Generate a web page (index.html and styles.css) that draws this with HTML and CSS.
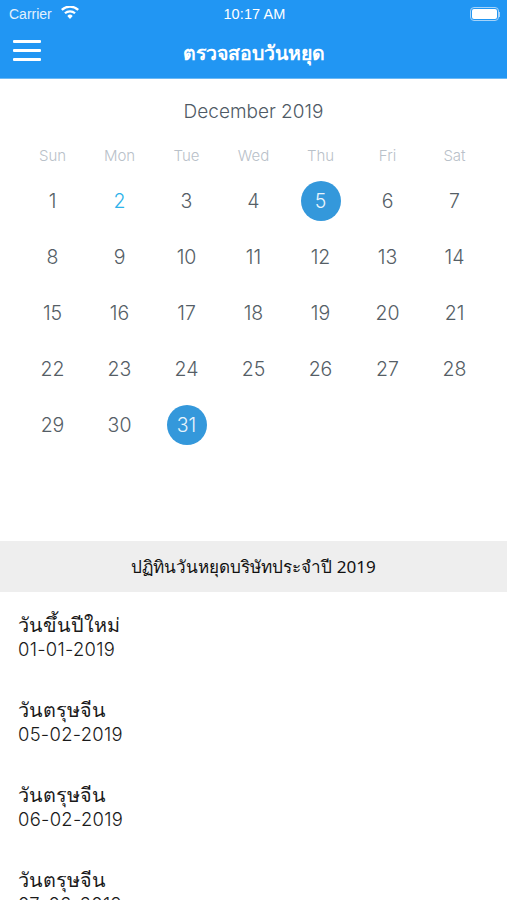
FILE: index.html
```html
<!DOCTYPE html>
<html lang="th">
<head>
<meta charset="utf-8">
<title>ตรวจสอบวันหยุด</title>
<link rel="stylesheet" href="styles.css">
</head>
<body>
<div class="app">
  <header class="top">
    <div class="status">
      <div class="status-left">
        <span>Carrier</span>
        <svg class="wifi" viewBox="0 0 18 13" aria-hidden="true"><path d="M9 13 6.300 9.900a3.900 3.900 0 0 1 5.400 0z"/><path d="M4.700 8.100 3.200 6.400a8.600 8.600 0 0 1 11.600 0l-1.500 1.700a6.300 6.300 0 0 0-8.600 0z"/><path d="M1.600 4.700 0 3a13.300 13.300 0 0 1 18 0l-1.600 1.700a11 11 0 0 0-14.800 0z"/></svg>
      </div>
      <span class="clock">10:17 AM</span>
      <div class="battery"><span class="battery-body"><span class="battery-fill"></span></span><span class="battery-cap"></span></div>
    </div>
    <div class="nav">
      <div class="burger"><span></span><span></span><span></span></div>
      <h1>ตรวจสอบวันหยุด</h1>
    </div>
  </header>
  <section class="calendar">
    <h2>December 2019</h2>
    <div class="grid weekdays">
      <span>Sun</span><span>Mon</span><span>Tue</span><span>Wed</span><span>Thu</span><span>Fri</span><span>Sat</span>
    </div>
    <div class="grid days">
      <span>1</span><span class="today">2</span><span>3</span><span>4</span><span class="picked">5</span><span>6</span><span>7</span>
      <span>8</span><span>9</span><span>10</span><span>11</span><span>12</span><span>13</span><span>14</span>
      <span>15</span><span>16</span><span>17</span><span>18</span><span>19</span><span>20</span><span>21</span>
      <span>22</span><span>23</span><span>24</span><span>25</span><span>26</span><span>27</span><span>28</span>
      <span>29</span><span>30</span><span class="picked">31</span>
    </div>
  </section>
  <div class="band">ปฏิทินวันหยุดบริษัทประจำปี 2019</div>
  <ul class="list">
    <li><strong>วันขึ้นปีใหม่</strong><span>01-01-2019</span></li>
    <li><strong>วันตรุษจีน</strong><span>05-02-2019</span></li>
    <li><strong>วันตรุษจีน</strong><span>06-02-2019</span></li>
    <li><strong>วันตรุษจีน</strong><span>07-02-2019</span></li>
  </ul>
</div>
</body>
</html>
```
FILE: styles.css
```css
* { box-sizing: border-box; }
html, body { margin: 0; padding: 0; height: 900px; overflow: hidden; background: #fff; }
body { font-family: "Inter", "Liberation Sans", "Noto Sans", sans-serif; }
.app { width: 507px; height: 900px; overflow: hidden; }
.top { height: 79px; background: #2196f3; color: #fff; border-bottom: 1px solid #6bb9f5; }
.status { height: 28px; padding: 0 7px 0 9px; display: grid; grid-template-columns: 1fr auto 1fr; align-items: center; font-family: "Liberation Sans", sans-serif; font-size: 14px; }
.status-left { display: flex; align-items: center; gap: 9px; color: #e3f1fd; }
.wifi { width: 18px; height: 13px; fill: #fff; margin-top: -3px; }
.clock { font-size: 14.500px; letter-spacing: .1px; }
.battery { justify-self: end; display: flex; align-items: center; }
.battery-body { width: 29px; height: 14px; border: 1px solid #a5d3f9; border-radius: 4px; padding: 1px; display: block; }
.battery-fill { display: block; height: 100%; background: #fff; border-radius: 2px; }
.battery-cap { width: 1.500px; height: 5px; background: #a5d3f9; }
.nav { height: 50px; position: relative; display: flex; align-items: center; justify-content: center; }
.nav h1 { margin: 0; font-size: 19.500px; font-weight: 700; line-height: 50px; font-family: "Noto Sans", "DejaVu Sans", sans-serif; }
.burger { position: absolute; left: 13px; top: 12px; width: 28px; display: flex; flex-direction: column; gap: 6px; }
.burger span { display: block; height: 3px; background: #fff; border-radius: 1px; }
.calendar { height: 462px; padding: 0 19px; color: #555e66; }
.calendar h2 { margin: 0; height: 65px; padding-top: 19px; text-align: center; font-size: 19px; line-height: 28px; font-weight: 300; color: #4f5a65; }
.grid { display: grid; grid-template-columns: repeat(7, 67px); justify-items: center; }
.weekdays { height: 24px; margin-bottom: 13px; font-size: 15px; line-height: 24px; font-weight: 300; color: #b9c1c9; }
.days { grid-auto-rows: 56px; font-size: 19.500px; font-weight: 300; }
.days span { width: 40px; height: 40px; line-height: 40px; text-align: center; border-radius: 50%; align-self: start; }
.days .today { color: #2db2ea; }
.days .picked { background: #3498db; color: #e8f4fc; }
.band { height: 51px; background: #eeeeee; color: #111; display: flex; align-items: center; justify-content: center; font-size: 17.100px; font-family: "Noto Sans", "Liberation Sans", sans-serif; }
.list { list-style: none; margin: 0; padding: 0; color: #1a1a1a; font-family: "Inter", "Noto Sans", sans-serif; }
.list li { height: 85px; padding: 18px 0 0 18px; }
.list strong { display: block; font-size: 19.800px; line-height: 30px; font-weight: 500; }
.list span { display: block; font-size: 18.400px; line-height: 20px; margin-top: -1px; font-weight: 300; letter-spacing: .3px; }
```
